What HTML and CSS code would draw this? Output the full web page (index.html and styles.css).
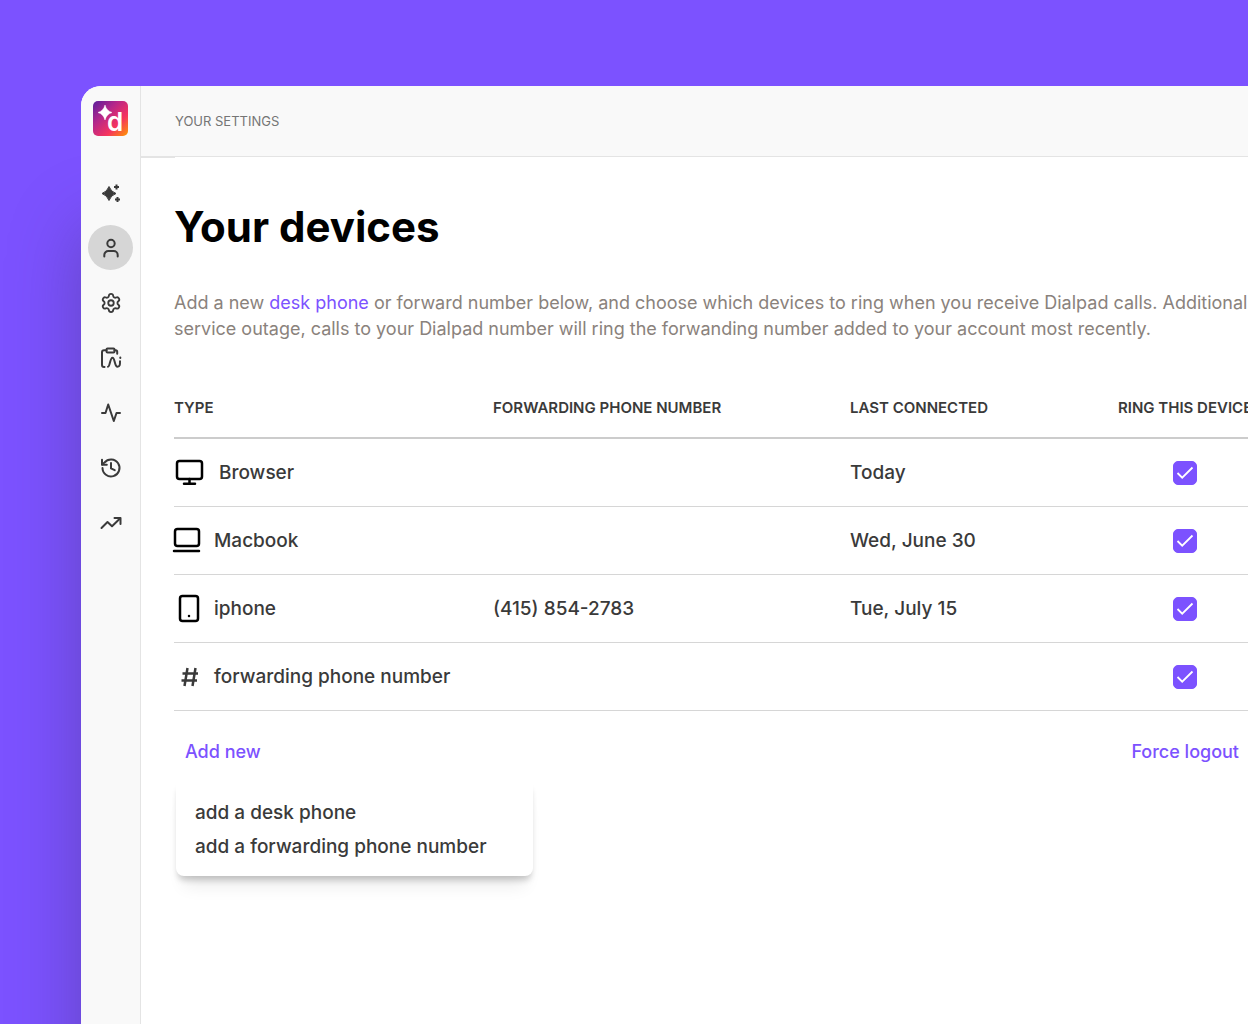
FILE: index.html
```
<!DOCTYPE html>
<html lang="en">
<head>
    <meta charset="UTF-8">
    <meta name="viewport" content="width=device-width, initial-scale=1.0">
    <title>Your devices</title>
    <link rel="stylesheet" href="styles.css">
</head>
<body>
    <div class="window">
        <nav class="sidebar" aria-label="Main">
            <a href="#home" class="logo" aria-label="Dialpad">
                <svg width="35" height="35" viewBox="0 0 35 35">
                    <defs>
                        <linearGradient id="logo-bg" x1="0" y1="0" x2="1" y2="1">
                            <stop offset="0" stop-color="#5a1e9c"/>
                            <stop offset="0.35" stop-color="#b5278a"/>
                            <stop offset="0.68" stop-color="#f5335f"/>
                            <stop offset="1" stop-color="#ff9a00"/>
                        </linearGradient>
                    </defs>
                    <rect width="35" height="35" rx="5" fill="url(#logo-bg)"/>
                    <path d="M12 4Q13.500 9.800 19 11.500Q13.500 13.200 12 19Q10.500 13.200 5 11.500Q10.500 9.800 12 4Z" fill="#fff" stroke="#fff" stroke-width="0.500"/>
                    <text x="14" y="30" class="logo-letter">d</text>
                </svg>
            </a>
            <div class="side-links">
                <a href="#ai" class="side-link" aria-label="AI">
                    <svg width="22" height="22" viewBox="0 0 22 22">
                        <path d="M9 4.500Q10.800 9.700 16 11.500Q10.800 13.300 9 18.500Q7.200 13.300 2 11.500Q7.200 9.700 9 4.500Z" fill="currentColor" stroke="currentColor" stroke-width="1" stroke-linejoin="round"/>
                        <path d="M16.500 2.500v5M14 5h5M17.500 15v5M15 17.500h5" fill="none" stroke="currentColor" stroke-width="2"/>
                    </svg>
                </a>
                <a href="#user" class="side-link active" aria-label="Your settings">
                    <svg class="line-icon" width="22" height="22" viewBox="0 0 22 22">
                        <circle cx="11" cy="6.500" r="3.700"/>
                        <path d="M4.300 19.500v-1.500a4 4 0 0 1 4-4h5.400a4 4 0 0 1 4 4v1.500"/>
                    </svg>
                </a>
                <a href="#settings" class="side-link" aria-label="Settings">
                    <svg class="line-icon" width="22" height="22" viewBox="0 0 24 24">
                        <path d="M9.700 4.100a2.340 2.340 0 0 1 4.660 0 2.340 2.340 0 0 0 3.320 1.920 2.340 2.340 0 0 1 2.330 4.030 2.340 2.340 0 0 0 0 3.830 2.340 2.340 0 0 1-2.330 4.030 2.340 2.340 0 0 0-3.320 1.920 2.340 2.340 0 0 1-4.660 0 2.340 2.340 0 0 0-3.320-1.920 2.340 2.340 0 0 1-2.330-4.030 2.340 2.340 0 0 0 0-3.830A2.340 2.340 0 0 1 6.380 6.020 2.340 2.340 0 0 0 9.700 4.100"/>
                        <circle cx="12" cy="12" r="3"/>
                    </svg>
                </a>
                <a href="#scorecards" class="side-link" aria-label="Scorecards">
                    <svg class="line-icon" width="22" height="22" viewBox="0 0 22 22">
                        <rect x="6.500" y="1.500" width="8" height="4" rx="1"/>
                        <path d="M6.500 3.300H4a2 2 0 0 0-2 2V18a2 2 0 0 0 2 2h.5M14.500 3.300h1.200a1.500 1.500 0 0 1 1.500 1.500v2"/>
                        <path d="M8 19.700c2 0 2-9 4.500-9s2 9 5 9c2.500 0 2.500-2 2.500-5.500"/>
                        <path d="M20.300 10.500v.5"/>
                    </svg>
                </a>
                <a href="#activity" class="side-link" aria-label="Activity">
                    <svg class="line-icon" width="22" height="22" viewBox="0 0 22 22">
                        <path d="M2 11H5.500L8.200 2.500L13.800 19L16.500 11H20"/>
                    </svg>
                </a>
                <a href="#history" class="side-link" aria-label="History">
                    <svg class="line-icon" width="22" height="22" viewBox="0 0 22 22">
                        <path d="M2.500 11A8.500 8.500 0 1 0 4.500 5.500L2 7.500"/>
                        <path d="M2 2.800v4.900h4.800M11 6v5.400l3.700 1.800"/>
                    </svg>
                </a>
                <a href="#analytics" class="side-link" aria-label="Analytics">
                    <svg class="line-icon" width="22" height="22" viewBox="0 0 22 22">
                        <path d="M1.500 16L7.500 10L12 14.200L20 6.500"/>
                        <path d="M14.500 6h6v6"/>
                    </svg>
                </a>
            </div>
        </nav>

        <main class="main">
            <header class="topbar">YOUR SETTINGS</header>

            <div class="content">
                <h1>Your devices</h1>
                <p class="intro">Add a new <a href="#desk-phone">desk phone</a> or forward number below, and choose which devices to ring when you receive Dialpad calls. Additionally,<br>
                service outage, calls to your Dialpad number will ring the forwanding number added to your account most recently.</p>

                <table class="devices">
                    <thead>
                        <tr>
                            <th class="col-type">TYPE</th>
                            <th class="col-number">FORWARDING PHONE NUMBER</th>
                            <th class="col-last">LAST CONNECTED</th>
                            <th class="col-ring">RING THIS DEVICE</th>
                        </tr>
                    </thead>
                    <tbody>
                        <tr>
                            <td>
                                <label class="device device-wide" for="ring-browser">
                                    <svg class="device-icon" width="30" height="30" viewBox="0 0 30 30">
                                        <rect x="3" y="3" width="25" height="18" rx="2.500"/>
                                        <path d="M15.500 21v4.500M10 25.800h11"/>
                                    </svg>
                                    Browser
                                </label>
                            </td>
                            <td></td>
                            <td>Today</td>
                            <td class="ring"><input type="checkbox" id="ring-browser" checked></td>
                        </tr>
                        <tr>
                            <td>
                                <label class="device" for="ring-macbook">
                                    <svg class="device-icon" width="30" height="30" viewBox="0 0 30 30">
                                        <rect x="1" y="3" width="24" height="17" rx="2.500"/>
                                        <path d="M0 25h25"/>
                                    </svg>
                                    Macbook
                                </label>
                            </td>
                            <td></td>
                            <td>Wed, June 30</td>
                            <td class="ring"><input type="checkbox" id="ring-macbook" checked></td>
                        </tr>
                        <tr>
                            <td>
                                <label class="device" for="ring-iphone">
                                    <svg class="device-icon" width="30" height="30" viewBox="0 0 30 30">
                                        <rect x="6" y="2" width="18" height="25" rx="2.500"/>
                                        <path d="M15 22v.1"/>
                                    </svg>
                                    iphone
                                </label>
                            </td>
                            <td>(415) 854-2783</td>
                            <td>Tue, July 15</td>
                            <td class="ring"><input type="checkbox" id="ring-iphone" checked></td>
                        </tr>
                        <tr>
                            <td>
                                <label class="device" for="ring-forwarding">
                                    <svg class="device-icon device-icon-hash" width="30" height="30" viewBox="0 0 30 30">
                                        <path d="M13.500 6L10.500 24M21.500 6L18.500 24M8.500 11.500H24M7.500 18.500H23"/>
                                    </svg>
                                    forwarding phone number
                                </label>
                            </td>
                            <td></td>
                            <td></td>
                            <td class="ring"><input type="checkbox" id="ring-forwarding" checked></td>
                        </tr>
                    </tbody>
                </table>

                <div class="actions">
                    <button type="button" class="text-button">Add new</button>
                    <button type="button" class="text-button">Force logout</button>
                </div>

                <div class="add-menu">
                    <button type="button">add a desk phone</button>
                    <button type="button">add a forwarding phone number</button>
                </div>
            </div>
        </main>
    </div>
</body>
</html>
```
FILE: styles.css
```
* {
    margin: 0;
    padding: 0;
    box-sizing: border-box;
}

body {
    min-height: 100vh;
    padding: 86px 0 0 81px;
    background: #7c52ff;
    color: #3a3a3a;
    font-family: Inter, "Liberation Sans", sans-serif;
    font-size: 19px;
    overflow: hidden;
}

a {
    color: #7c52ff;
    text-decoration: none;
}

button {
    border: none;
    background: none;
    font: inherit;
    cursor: pointer;
}

.window {
    display: flex;
    min-height: calc(100vh - 86px);
    background: #fff;
    border-radius: 20px 0 0 0;
    box-shadow: 0 140px 70px rgba(60, 50, 100, 0.4);
    overflow: hidden;
}

/* Sidebar */
.sidebar {
    display: flex;
    flex-direction: column;
    align-items: center;
    flex: 0 0 60px;
    padding-top: 15px;
    background: #f9f9f9;
    border-right: 1px solid #e4e4e4;
}

.logo {
    height: 35px;
}

.logo-letter {
    fill: #fff;
    font-size: 26px;
    font-weight: 600;
}

.side-links {
    display: flex;
    flex-direction: column;
    gap: 10px;
    margin-top: 34px;
}

.side-link {
    display: flex;
    align-items: center;
    justify-content: center;
    width: 45px;
    height: 45px;
    border-radius: 50%;
    color: #3a3a3a;
}

.side-link.active {
    background: #d6d6d6;
}

.line-icon {
    fill: none;
    stroke: currentColor;
    stroke-width: 2;
    stroke-linecap: round;
    stroke-linejoin: round;
}

/* Main */
.main {
    flex: 1;
    min-width: 0;
}

.topbar {
    position: relative;
    display: flex;
    align-items: center;
    height: 71px;
    padding-left: 34px;
    background: #f9f9f9;
    border-bottom: 1px solid #e4e4e4;
    color: #757575;
    font-size: 13px;
}

.topbar::after {
    content: "";
    position: absolute;
    left: 0;
    top: 100%;
    width: 34px;
    height: 2px;
    background: #e4e4e4;
}

.content {
    padding: 40px 0 0 33px;
}

h1 {
    color: #000;
    font-size: 42px;
    font-weight: 700;
    line-height: 60px;
}

.intro {
    margin-top: 33px;
    color: #8a827c;
    font-size: 18px;
    line-height: 26px;
    white-space: nowrap;
}

/* Devices table */
.devices {
    width: 100%;
    margin-top: 36px;
    border-collapse: separate;
    border-spacing: 0;
    table-layout: fixed;
    white-space: nowrap;
}

.devices th {
    height: 61px;
    border-bottom: 2px solid #ccc;
    font-size: 15px;
    font-weight: 600;
    text-align: left;
}

.devices td {
    height: 68px;
    border-bottom: 1px solid #d6d6d6;
    font-weight: 500;
}

.col-type {
    width: 319px;
}

.col-number {
    width: 357px;
}

.col-last {
    width: 268px;
}

.device {
    display: flex;
    align-items: center;
    gap: 10px;
}

.device-wide {
    gap: 15px;
}

.device-icon {
    fill: none;
    stroke: #000;
    stroke-width: 2.5;
    stroke-linecap: round;
    stroke-linejoin: round;
    overflow: visible;
}

.device-icon-hash {
    stroke: #3a3a3a;
    stroke-linecap: butt;
}

.devices .ring {
    padding-left: 55px;
}

.ring input {
    display: block;
    width: 24px;
    height: 24px;
    appearance: none;
    border-radius: 5px;
    border: 1px solid #7c52ff;
}

.ring input:checked {
    background: #7c52ff url("data:image/svg+xml,%3Csvg xmlns='http://www.w3.org/2000/svg' viewBox='0 0 22 22'%3E%3Cpath d='M3.500 11L8.200 15.700L18.500 5.500' fill='none' stroke='white' stroke-width='1.800'/%3E%3C/svg%3E") center / 22px no-repeat;
}

/* Actions under the table */
.actions {
    display: flex;
    justify-content: space-between;
    padding: 28px 9px 0 11px;
}

.text-button {
    color: #7c52ff;
    font-size: 18px;
    font-weight: 500;
    line-height: 26px;
}

.add-menu {
    display: flex;
    flex-direction: column;
    align-items: flex-start;
    width: 357px;
    margin: 15px 2px;
    padding: 16px 19px 12px;
    background: #fff;
    border-radius: 8px;
    box-shadow: 0 6px 6px -2px rgba(0, 0, 0, 0.2), 0 18px 16px -8px rgba(0, 0, 0, 0.08);
}

.add-menu button {
    color: #3a3a3a;
    font-weight: 500;
    line-height: 34px;
}
```
